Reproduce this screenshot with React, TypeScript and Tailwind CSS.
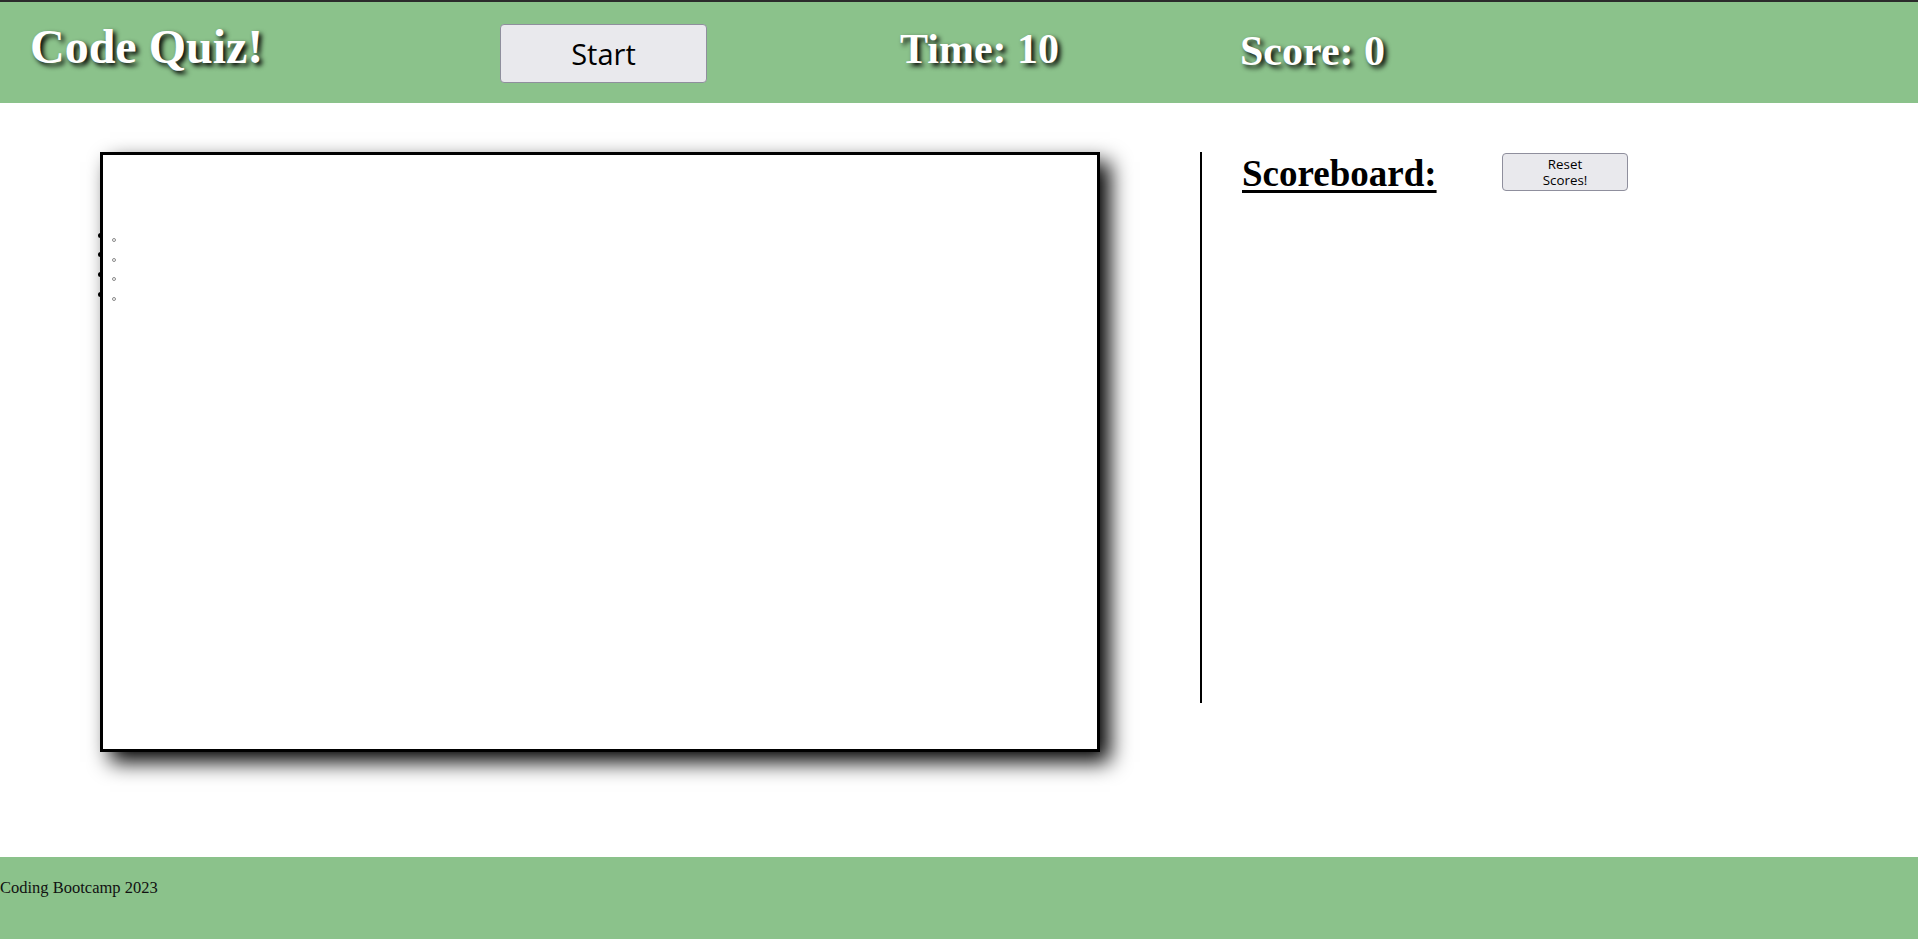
import React from "react";

const serif = "font-['Liberation_Serif',_'Times_New_Roman',_serif]";
const sans = "font-['Open_Sans',_'Noto_Sans',_sans-serif]";

function Header() {
  return (
    <header className="h-[101px] bg-[#8bc28b] flex items-start">
      <div className={`w-[470px] ml-[30px] mt-[21px] ${serif}`}>
        <h1 className="text-[48px] leading-none font-bold text-white [text-shadow:3px_3px_5px_#000]">
          Code Quiz!
        </h1>
      </div>
      <button
        type="button"
        className={`mt-[22px] w-[207px] h-[59px] bg-[#e9e9ed] border border-[#8f8f9d] rounded-[4px] text-black text-[29px] ${sans}`}
      >
        Start
      </button>
      <div className={`ml-[193px] w-[340px] mt-[26px] ${serif}`}>
        <span className="text-[42px] leading-none font-bold text-white [text-shadow:3px_3px_5px_#000]">
          Time: 10
        </span>
      </div>
      <div className={`mt-[28px] ${serif}`}>
        <span className="text-[42px] leading-none font-bold text-white [text-shadow:3px_3px_5px_#000]">
          Score: 0
        </span>
      </div>
    </header>
  );
}

function QuizBox() {
  const choices = [0, 1, 2, 3];
  return (
    <section className="w-[1000px] h-[600px] border-[3px] border-black bg-white shadow-[10px_10px_20px_#000]">
      <ul className="mt-[70px]">
        {choices.map((c) => (
          <li key={c} className="flex items-start h-[19.7px]">
            <span className="-ml-[4.8px] mt-[7.5px] w-[5px] h-[5px] rounded-full bg-black" />
            <span className="ml-[8.5px] mt-[13px] w-[4px] h-[4px] rounded-full border border-[#8a8a8a]" />
          </li>
        ))}
      </ul>
    </section>
  );
}

function Scoreboard() {
  return (
    <aside className="flex items-start">
      <div className="w-[2px] h-[551px] bg-black" />
      <h2
        className={`ml-[40px] mt-[3px] w-[260px] text-[37px] leading-none font-bold text-black underline decoration-[3px] underline-offset-[4px] ${serif}`}
      >
        Scoreboard:
      </h2>
      <button
        type="button"
        className={`mt-[1px] w-[126px] h-[38px] bg-[#e9e9ed] border border-[#8f8f9d] rounded-[4px] text-black text-[13.33px] leading-[16px] ${sans}`}
      >
        Reset
        <br />
        Scores!
      </button>
    </aside>
  );
}

export default function App() {
  return (
    <div className="w-full bg-white">
      <div className="h-[2px] bg-[#2b2b2b]" />
      <Header />
      <main className="h-[754px] flex items-start pt-[49px] pl-[100px]">
        <QuizBox />
        <div className="ml-[100px]">
          <Scoreboard />
        </div>
      </main>
      <footer className={`h-[82px] bg-[#8bc28b] pt-[23px] ${serif}`}>
        <p className="text-[16.5px] leading-none text-[#111]">Coding Bootcamp 2023</p>
      </footer>
    </div>
  );
}
